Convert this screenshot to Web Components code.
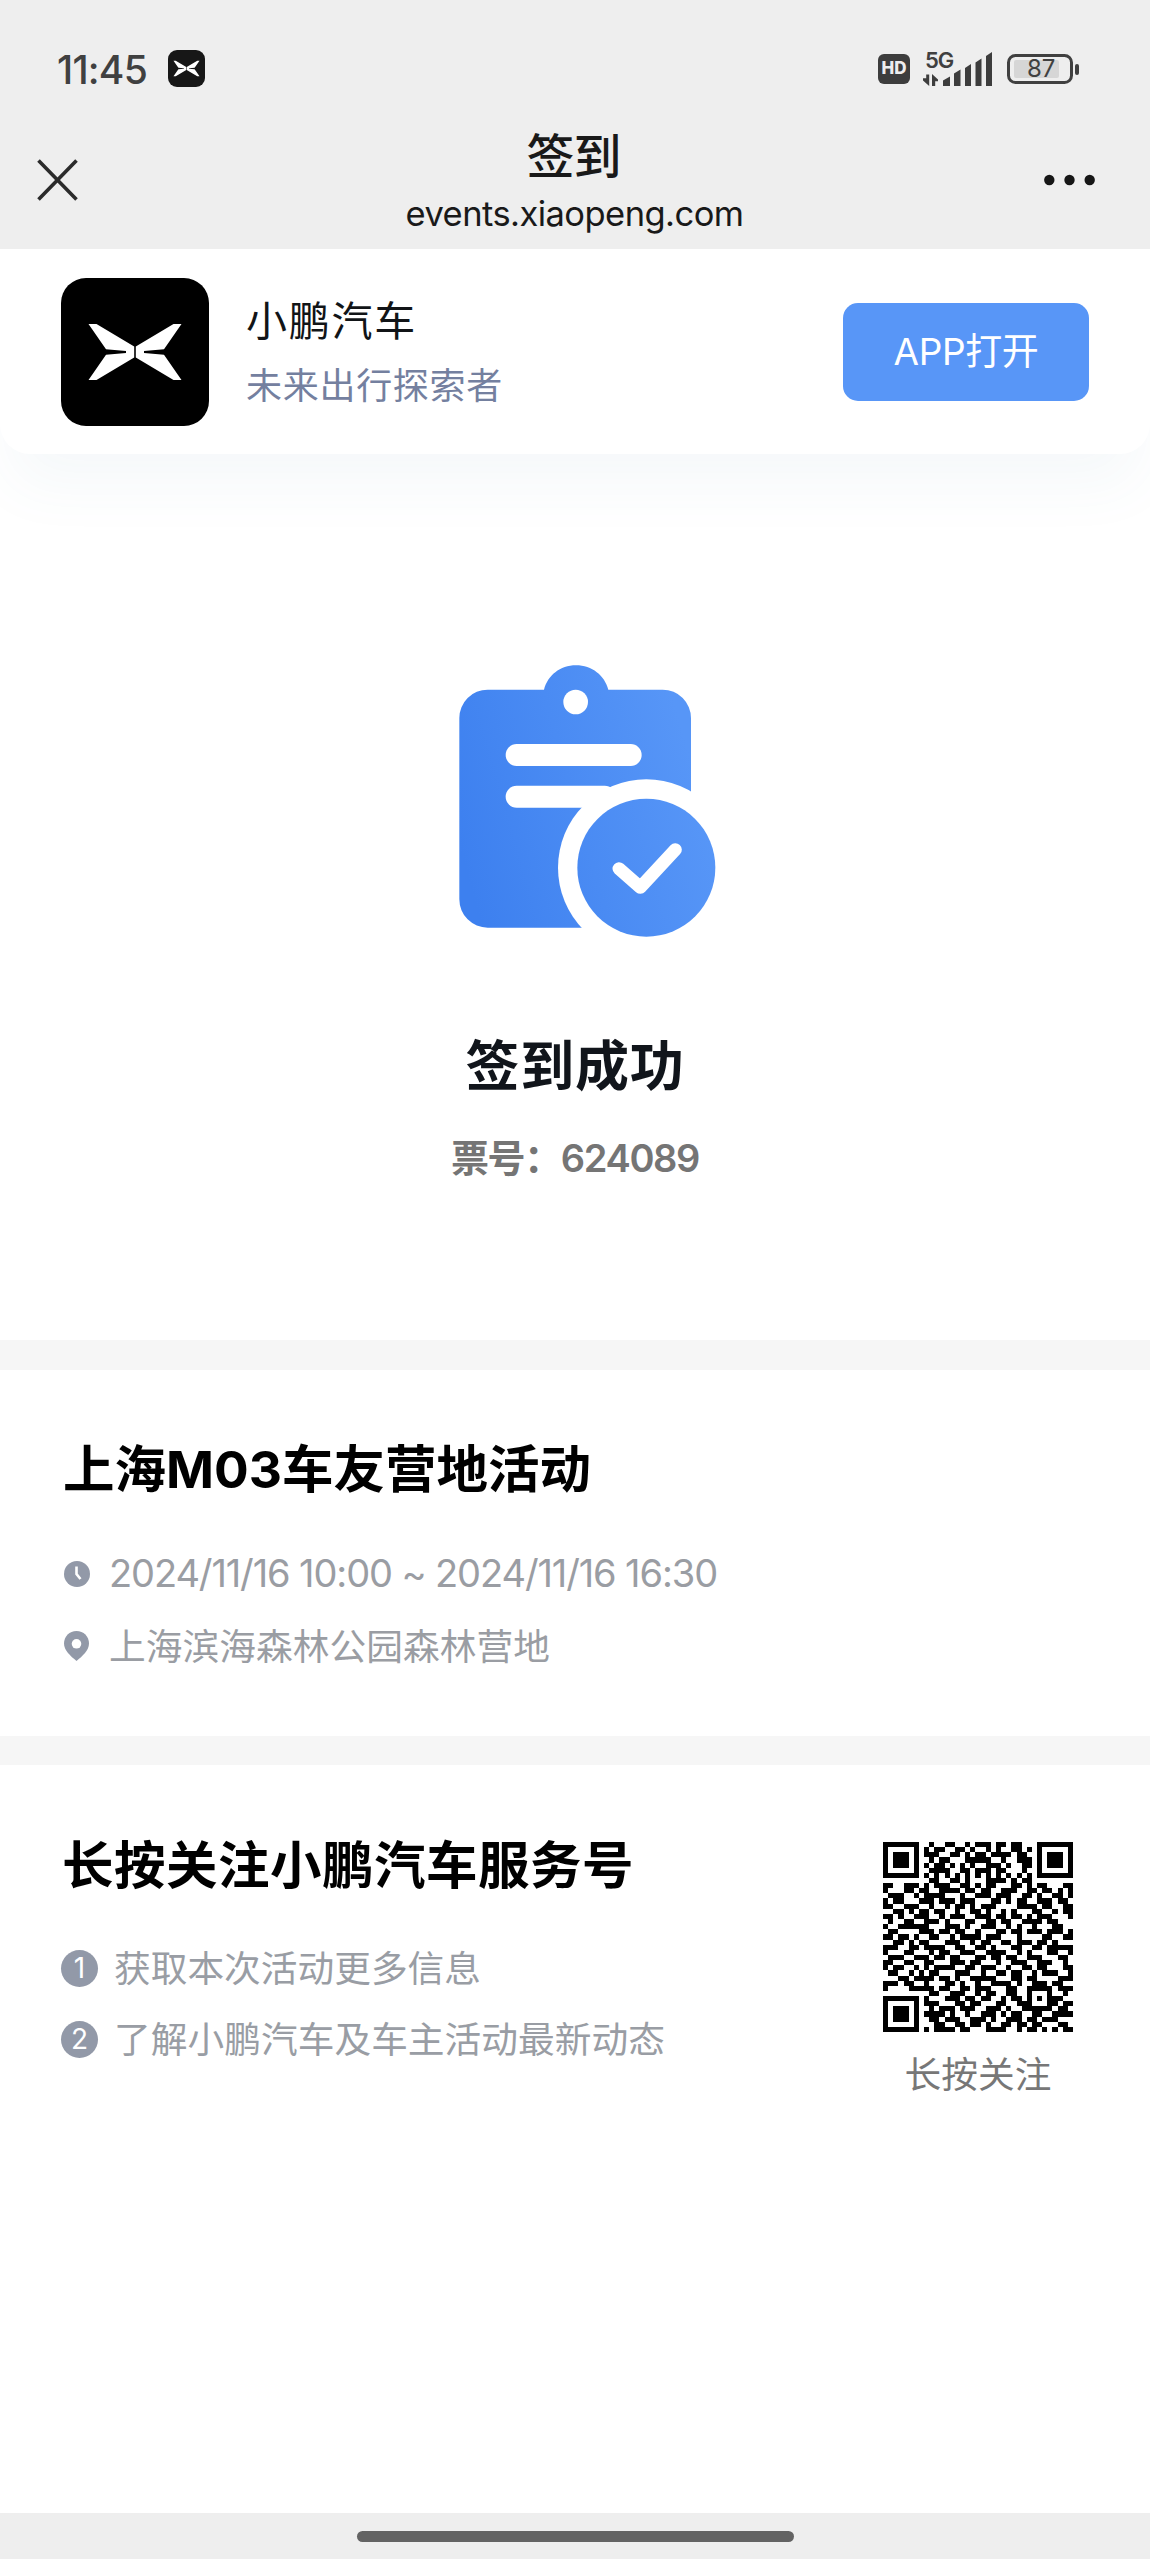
<!DOCTYPE html>
<html lang="zh-CN">
<head>
<meta charset="utf-8">
<title>签到</title>
<style>
html,body{margin:0;padding:0;background:#fff}
body{width:1150px;height:2559px;overflow:hidden;font-family:"Inter","Noto Sans CJK SC",sans-serif;color:#000}
</style>
</head>
<body>
<checkin-page></checkin-page>
<script>
function define(name, html, ready) {
  const t = document.createElement('template');
  t.innerHTML = html;
  customElements.define(name, class extends HTMLElement {
    constructor() {
      super();
      this.attachShadow({ mode: 'open' }).appendChild(t.content.cloneNode(true));
    }
    connectedCallback() { if (ready) ready.call(this, this.shadowRoot); }
  });
}

/* One line of text, tracked so that its advance equals the "w" attribute. */
define('fit-text', `<style>
:host{display:block;white-space:nowrap;flex:none;line-height:1}
span{display:inline-block;white-space:pre}
</style><span></span>`, function (r) {
  const s = r.querySelector('span'), w = +this.getAttribute('w'), text = this.getAttribute('text');
  s.textContent = text;
  this.style.width = w + 'px';
  s.style.letterSpacing = (w - s.getBoundingClientRect().width) / [...text].length + 'px';
});

define('brand-mark', `<style>:host{display:block}svg{display:block;width:100%;height:100%}
rect{fill:var(--bg,#000);rx:var(--r,25px)}g{fill:#fff;transform:translate(74px,74px) scale(var(--s,1))}</style>
<svg viewBox="0 0 148 148"><rect width="148" height="148"/>
<g><path d="M-46.500-28h8L-.8-5.500v11L-38.500 28h-8L-29 2.800-9 1v-2L-29-2.800z"/><path d="M46.500-28h-8L.8-5.500v11L38.500 28h8L29 2.800 9 1v-2L29-2.800z"/></g></svg>`);

define('status-bar', `<style>
:host{display:flex;height:137px;padding:0 71px 0 57px;box-sizing:border-box;color:#404040}
.l,.r{display:flex;align-items:center;height:137px}
.r{margin-left:auto}
.l fit-text{font-size:39px;font-weight:450;margin-top:1px}
brand-mark{width:37px;height:37px;margin-left:21px;--bg:#171717;--s:1.12;--r:36px}
svg{display:block}
.hd{width:32px;height:30px;border-radius:6px;background:#3d3d3d;color:#eee;display:flex;align-items:center;justify-content:center;font-size:17px;font-weight:800}
.sig{position:relative;width:70px;height:36px;margin:0 15px 0 12px}
.sig fit-text{position:absolute;left:3px;top:-1px;font-size:22px;font-weight:600;line-height:20px}
.bat{position:relative;width:72px;height:30px}
.bat fit-text{position:absolute;left:20px;top:3px;font-size:24px;line-height:24px}
</style>
<div class="l"><fit-text w="90" text="11:45"></fit-text><brand-mark></brand-mark></div>
<div class="r"><div class="hd"><fit-text w="25" text="HD"></fit-text></div>
<div class="sig"><svg width="70" height="36" fill="#3d3d3d"><path d="M21 29.500l7-4V35h-7zM32 22.500l6.500-4V35H32zM43 17l6-4v22h-6zM53.500 11.500l6-4V35h-6zM64 5l6-4v34h-6z"/><path d="M4.200 23.500h3V35L1 29.500v-2.200h3.200zM10 35h3.200v-4.800H16v-1.700l-6-5.500z"/></svg><fit-text w="28" text="5G"></fit-text></div>
<div class="bat"><svg width="72" height="30"><rect x="7" y="6" width="45" height="18" rx="2" fill="#d6d6d6"/><rect x="1.500" y="1.500" width="63" height="27" rx="7" fill="none" stroke="#404040" stroke-width="3"/><rect x="68" y="10" width="4" height="11" rx="2" fill="#404040"/></svg><fit-text w="28" text="87"></fit-text></div></div>`);

define('nav-bar', `<style>
:host{display:flex;height:112px;align-items:center;justify-content:space-between;padding:0 55px 0 37px;color:#191919;box-sizing:border-box}
.side{width:120px;margin-top:-26px}.side:last-child svg{margin-left:auto}
.mid{display:flex;flex-direction:column;align-items:center;height:112px;margin-left:17px}
.t{font-size:48px;line-height:40px;font-weight:500;margin-left:-2px}.u{font-size:34.500px;margin-top:17px;line-height:40px}
svg{display:block}
</style>
<div class="side"><svg width="42" height="42" stroke="#2b2b2b" stroke-width="3.600"><path d="M1.500 1.500l38 39M39.500 1.500l-38 39"/></svg></div>
<div class="mid"><fit-text class="t" w="94" text="签到"></fit-text><fit-text class="u" w="338" text="events.xiaopeng.com"></fit-text></div>
<div class="side"><svg width="51" height="12" fill="#161616"><circle cx="5.300" cy="6" r="5.200"/><circle cx="25.500" cy="6" r="5.200"/><circle cx="45.700" cy="6" r="5.200"/></svg></div>`);

define('app-banner', `<style>
:host{display:flex;align-items:center;height:205px;box-sizing:border-box;padding:0 61px;background:#fff;border-radius:0 0 30px 30px;box-shadow:0 42px 60px -12px rgba(70,120,170,.055);position:relative}
brand-mark{width:148px;height:148px}
.n{display:flex;flex-direction:column;gap:26px;margin:2px 0 0 37px}
.a{font-size:41px;color:#111417}.b{font-size:36px;color:#74809f}
.btn{margin-left:auto;width:246px;height:98px;border-radius:15px;background:#5896f7;color:#fff;display:flex;align-items:center;justify-content:center;font-size:37px;font-weight:400}
</style><brand-mark></brand-mark><div class="n"><fit-text class="a" w="171" text="小鹏汽车"></fit-text><fit-text class="b" w="257" text="未来出行探索者"></fit-text></div>
<div class="btn"><fit-text w="145" text="APP打开"></fit-text></div>`);

define('checkin-result', `<style>
:host{display:flex;flex-direction:column;align-items:center;height:886px;box-sizing:border-box;padding-top:186px}
svg{display:block;margin-left:20px}
.t{font-size:54px;font-weight:700;color:#11151b;margin-top:80px}
.n{font-size:38px;font-weight:600;color:#757575;margin-top:45px}
</style>
<svg width="310" height="320" viewBox="0 0 930 960"><defs><linearGradient id="g" gradientUnits="userSpaceOnUse" x1="88" y1="620" x2="800" y2="420"><stop offset="0" stop-color="#3d80ef"/><stop offset="1" stop-color="#5796f7"/></linearGradient></defs>
<path fill="url(#g)" d="M173 149H342C353 107 390 76 438 76S524 107 535 149H698A85 85 0 0 1 783 234V778A85 85 0 0 1 698 863H173A85 85 0 0 1 88 778V234A85 85 0 0 1 173 149z"/>
<circle cx="437" cy="186" r="37" fill="#fff"/><rect x="227" y="312" width="408" height="66" rx="33" fill="#fff"/><rect x="227" y="437" width="330" height="66" rx="33" fill="#fff"/>
<circle cx="649" cy="683" r="265" fill="#fff"/><circle cx="649" cy="683" r="207" fill="url(#g)"/><path d="M567 686l64 56 105-113" fill="none" stroke="#fff" stroke-width="39" stroke-linecap="round" stroke-linejoin="round"/></svg>
<fit-text class="t" w="219" text="签到成功"></fit-text><fit-text class="n" w="248" text="票号：624089"></fit-text>`);

define('divider-band', `<style>:host{display:block;height:var(--h,30px);background:#f6f6f6}</style>`);

define('event-info', `<style>
:host{display:flex;flex-direction:column;height:366px;box-sizing:border-box;padding:74px 0 0 63px}
.t{font-size:51.500px;font-weight:700}
.row{display:flex;align-items:center;height:40px;font-size:36.700px;color:#9a9da3}
.d{margin-top:58px;font-size:38px}.p{margin-top:32px}
.d fit-text{margin-top:-2px}.p fit-text{margin-top:3px}
svg{display:block;margin-right:18px}
</style>
<fit-text class="t" w="528" text="上海M03车友营地活动"></fit-text>
<div class="row d"><svg width="28" height="28"><circle cx="14" cy="14" r="13" fill="#9299a8"/><path d="M13.500 6.500V14l4 5" fill="none" stroke="#fff" stroke-width="2.600"/></svg><fit-text w="608" text="2024/11/16 10:00 ~ 2024/11/16 16:30"></fit-text></div>
<div class="row p"><svg width="28" height="30"><path fill="#9299a8" d="M13.500 0C6.500 0 1 5.400 1 12.500 1 19.500 7.500 25 13.500 30c6-5 12.500-10.500 12.500-17.500C26 5.400 20.500 0 13.500 0z"/><circle cx="13.500" cy="12.800" r="4.800" fill="#fff"/></svg><fit-text w="441" text="上海滨海森林公园森林营地"></fit-text></div>`);

define('qr-code', `<style>:host{display:block;width:190px;height:190px}svg{display:block}</style><svg width="190" height="190" viewBox="0 0 37 37" shape-rendering="crispEdges"><path/></svg>`, function (r) {
  const rows = [
    '0000000001001100101110110110000000000',
    '0000000010110011010010100110100000000',
    '0000000011100110101101111011000000000',
    '0000000001011000111110010011100000000',
    '0000000010110101010011101001100000000',
    '0000000001111001101110110001000000000',
    '0000000000000000000000000000000000000',
    '0000000001100110100011110101100000000',
    '1100111010111001101011000110101100011',
    '1000110110011110110110011100110110101',
    '0111000011110001001110111001101001101',
    '1011001111011101110001101011001110110',
    '1100110001001011010111000011110110011',
    '0011011110110010011010010100011001011',
    '1101000110010111001110110110101110001',
    '0100111011101000110011011001111011000',
    '1001110110001110100111001010010001100',
    '0110000111011011001000110110111011101',
    '1101101001100101111011100010000110011',
    '0011011110001110010110011011101101000',
    '1110010011110011001101000110011011111',
    '1000111001011001110011110010100011001',
    '0111000110110110001101101100111000110',
    '1100111011000111011000100111001110010',
    '1011000010111100110111001001101100011',
    '0110011101100011100100110110010111001',
    '0001100111011010011111000110110000111',
    '1110110010001101001001111010011101100',
    '1000011111011001101110001100111110111',
    '0000000001100111001011001100100010010',
    '0000000010001110110110010110101011100',
    '0000000011100011011000110011100011011',
    '0000000001011101110011101001111110110',
    '0000000011110100100111010110011001111',
    '0000000001101110011101001110110111000',
    '0000000000110011011010011011011000110',
    '0000000010111101100011110010110101011'];
  const ring = (x, y, cx, cy, n) => {
    const d = Math.max(Math.abs(x - cx), Math.abs(y - cy));
    return d > n ? null : n === 4 ? +(d < 2 || d === 3) : +(d !== 1);
  };
  let d = '';
  for (let y = 0; y < 37; y++) for (let x = 0; x < 37; x++) {
    let v = +rows[y][x];
    if (x === 6 || y === 6) v = +((x + y) % 2 === 0);
    for (const [cx, cy, n] of [[3, 3, 4], [33, 3, 4], [3, 33, 4], [30, 30, 2]]) {
      const k = ring(x, y, cx, cy, n);
      if (k !== null) v = k;
    }
    if (v) d += `M${x} ${y}h1v1h-1z`;
  }
  r.querySelector('path').setAttribute('d', d);
});

define('follow-card', `<style>
:host{display:flex;justify-content:space-between;box-sizing:border-box;height:748px;padding:75px 77px 0 61px}
.l{display:flex;flex-direction:column}
.t{font-size:51.500px;font-weight:700;margin-left:1px}
.s{display:flex;align-items:center;height:38px;font-size:36.700px;color:#999da4}
.s fit-text{margin-top:2px}
.s.a{margin-top:58px}.s.b{margin-top:33px}
b{width:37px;height:37px;border-radius:50%;background:#9299a8;color:#fff;font-weight:400;font-size:28px;line-height:37px;text-align:center;margin-right:16px;flex:none}
.r{display:flex;flex-direction:column;align-items:center;padding-top:2px}
.c{font-size:36.700px;color:#777;margin-top:25px}
</style><div class="l"><fit-text class="t" w="572" text="长按关注小鹏汽车服务号"></fit-text>
<div class="s a"><b>1</b><fit-text w="367" text="获取本次活动更多信息"></fit-text></div>
<div class="s b"><b>2</b><fit-text w="551" text="了解小鹏汽车及车主活动最新动态"></fit-text></div></div>
<div class="r"><qr-code></qr-code><fit-text class="c" w="147" text="长按关注"></fit-text></div>`);

define('home-indicator', `<style>:host{display:flex;justify-content:center;height:46px;background:#eee;padding-top:18px;box-sizing:border-box}i{display:block;width:437px;height:11px;border-radius:5.500px;background:#636363}</style><i></i>`);

define('checkin-page', `<style>:host{display:flex;flex-direction:column;width:1150px;height:2559px;background:#fff}
header{background:#eee;height:249px;flex:none;position:relative;z-index:2}
divider-band{flex:none}</style>
<header><status-bar></status-bar><nav-bar></nav-bar></header>
<app-banner></app-banner><checkin-result></checkin-result><divider-band></divider-band><event-info></event-info><divider-band style="--h:29px"></divider-band><follow-card></follow-card><home-indicator></home-indicator>`);
</script>
</body>
</html>
